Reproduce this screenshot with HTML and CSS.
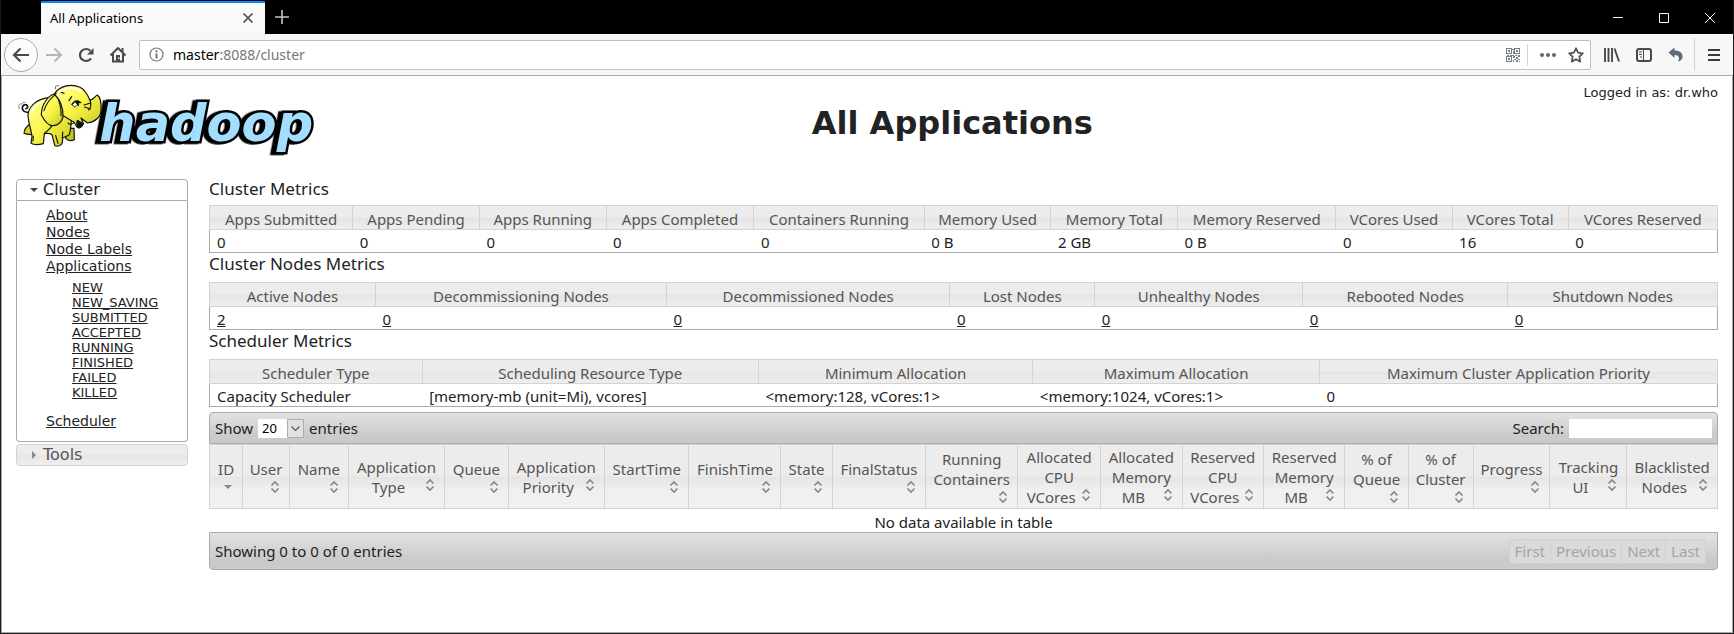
FILE: index.html
```html
<!DOCTYPE html>
<html lang="en">
<head>
<meta charset="utf-8">
<title>All Applications</title>
<link rel="stylesheet" href="styles.css">
</head>
<body>
<div class="window">
  <header class="titlebar">
    <div class="tab">
      <span class="tab-title">All Applications</span>
      <button class="tab-close" aria-label="Close tab"><svg width="12" height="12" viewBox="0 0 12 12"><path d="M1.5 1.5l9 9M10.500 1.500l-9 9" stroke="#4a4a4a" stroke-width="1.700" fill="none"/></svg></button>
    </div>
    <button class="new-tab" aria-label="New tab"><svg width="14" height="14" viewBox="0 0 14 14"><path d="M7 0v14M0 7h14" stroke="#c4c4c4" stroke-width="1.600"/></svg></button>
    <div class="window-controls">
      <button aria-label="Minimize"><svg width="12" height="12" viewBox="0 0 12 12"><path d="M1 5.500h10" stroke="#fff"/></svg></button>
      <button aria-label="Maximize"><svg width="12" height="12" viewBox="0 0 12 12"><path d="M1.500 1.500h9v9h-9z" stroke="#fff" fill="none"/></svg></button>
      <button aria-label="Close"><svg width="12" height="12" viewBox="0 0 12 12"><path d="M1 1l10 10M11 1L1 11" stroke="#fff"/></svg></button>
    </div>
  </header>

  <nav class="toolbar" aria-label="Browser">
    <button class="back" aria-label="Back"><svg width="18" height="16" viewBox="0 0 18 16"><path d="M17 8H2M8.500 1.500L2 8l6.500 6.500" stroke="#4a4a4a" stroke-width="2.200" fill="none"/></svg></button>
    <button class="tool" aria-label="Forward"><svg width="18" height="16" viewBox="0 0 18 16"><path d="M1 8h15M9.500 1.500L16 8l-6.500 6.500" stroke="#b4b4b4" stroke-width="2" fill="none"/></svg></button>
    <button class="tool" aria-label="Reload"><svg width="16" height="16" viewBox="0 0 16 16"><path d="M13 11.300A6 6 0 1 1 12.300 3.800" stroke="#4a4a4a" stroke-width="2.200" fill="none"/><path d="M15.500 1v6.500H9z" fill="#4a4a4a"/></svg></button>
    <button class="tool" aria-label="Home"><svg width="18" height="17" viewBox="0 0 18 17"><path d="M1.500 9.500L9 2l7.500 7.500M13.500 2v4" stroke="#4a4a4a" stroke-width="2" fill="none" stroke-linejoin="round"/><path d="M4 8v7.500h10V8" stroke="#4a4a4a" stroke-width="2" fill="none"/><path d="M7 9h4v7H7z" fill="#4a4a4a"/><path d="M9 11.500h1.500v1.500H9z" fill="#f9f9fa"/></svg></button>
    <div class="urlbar">
      <svg width="15" height="15" viewBox="0 0 15 15"><circle cx="7.500" cy="7.500" r="6.500" fill="none" stroke="#777" stroke-width="1.200"/><path d="M7.500 6.500V11.500" stroke="#666" stroke-width="1.800"/><circle cx="7.500" cy="4.300" r="1.100" fill="#666"/></svg>
      <span class="url"><b>master</b>:8088/cluster</span>
      <div class="url-actions">
        <button aria-label="QR code"><svg width="14" height="14" viewBox="0 0 14 14" shape-rendering="crispEdges"><path d="M.5 .5h5v5h-5zM8.500 .5h5v5h-5zM.5 8.500h5v5h-5z" fill="none" stroke="#737b87"/><path d="M2 2h2v2H2zM10 2h2v2h-2zM2 10h2v2H2zM6 1h2v1H6zM7 3h1v3H7zM1 7h2v1H1zM4 7h4v1H4zM7 8h2v2H7zM9 7h2v1H9zM12 7h2v2h-2zM10 9h2v2h-2zM8 11h2v1H8zM12 11h2v1h-2zM7 12h1v2H7zM10 12h2v2h-2zM13 13h1v1h-1z" fill="#737b87"/></svg></button>
        <span class="url-divider"></span>
        <button aria-label="Page actions"><svg width="16" height="4" viewBox="0 0 16 4"><circle cx="2" cy="2" r="2" fill="#666"/><circle cx="8" cy="2" r="2" fill="#666"/><circle cx="14" cy="2" r="2" fill="#666"/></svg></button>
        <button aria-label="Bookmark"><svg width="16" height="16" viewBox="0 0 16 16"><path d="M8 1.300l2.100 4.400 4.700.6-3.400 3.400.8 4.900L8 12.300l-4.200 2.300.8-4.900L1.200 6.300l4.700-.6z" fill="none" stroke="#555" stroke-width="1.800" stroke-linejoin="round"/></svg></button>
      </div>
    </div>
    <button class="tool library" aria-label="Library"><svg width="16" height="14" viewBox="0 0 16 14"><path d="M1 0v14M4.500 0v14M8 0v14M10.500 .5L15 13.500" stroke="#4a4a4a" stroke-width="1.900"/></svg></button>
    <button class="tool" aria-label="Sidebar"><svg width="16" height="14" viewBox="0 0 16 14"><rect x="1" y="1" width="14" height="12" rx="2" fill="none" stroke="#4a4a4a" stroke-width="2"/><path d="M7.500 1v12" stroke="#4a4a4a"/><path d="M3 4h3M3 6.500h3M4 9h2" stroke="#4a4a4a"/></svg></button>
    <button class="tool" aria-label="Undo"><svg width="16" height="15" viewBox="0 0 16 15"><path d="M.5 5.500L6.500 .5v3C12 3.500 15 6 14.500 10.500 14 12.500 12.500 14 10 14.500 12 11.500 11 8 6.500 8v3z" fill="#5e6b7b"/></svg></button>
    <span class="toolbar-divider"></span>
    <button class="tool menu" aria-label="Menu"><svg width="12" height="12" viewBox="0 0 12 12"><path d="M0 1h12M0 6h12M0 11h12" stroke="#3c3c3c" stroke-width="2"/></svg></button>
  </nav>

  <main class="page">
    <div class="banner">
      <a href="#" class="logo" aria-label="hadoop">
        <svg width="310" height="80" viewBox="45 240 930 240">
          <defs>
            <linearGradient id="skin" x1="0" y1="0" x2="1" y2="1"><stop offset="0" stop-color="#ffffa0"/><stop offset=".45" stop-color="#fbf74e"/><stop offset="1" stop-color="#c9c91c"/></linearGradient>
          </defs>
          <text class="wordmark" x="298" y="424">hadoop</text>
          <g stroke="#111" stroke-width="3.500" stroke-linejoin="round" stroke-linecap="round">
            <path d="M86 336C68 340 62 322 72 315 82 311 88 322 78 326" fill="none" stroke-width="5"/>
            <path d="M93 370C78 380 72 392 72 400 80 404 92 402 100 405L110 385z" fill="#d6d522"/>
            <path d="M205 385L197 416C206 424 216 422 223 419L222 385z" fill="#c4c41c"/>
            <path d="M150 293C110 295 84 320 84 348 86 375 95 392 96 410L93 430C105 437 118 434 130 431L133 401C142 399 150 400 156 404 160 420 162 430 165 437 175 441 185 435 187 428L188 414 207 405C212 395 213 380 214 360L185 310z" fill="url(#skin)"/>
            <path d="M163 282C180 256 215 250 240 262 256 270 263 285 269 299 280 303 285 287 292 285 301 291 304 310 303 330 303 351 285 366 262 369 256 362 249 360 243 354L250 370C247 381 236 388 230 380 224 372 226 366 216 363L186 345z" fill="url(#skin)"/>
            <path d="M232 361C240 366 247 370 250 371 247 381 238 385 232 379 229 372 231 366 232 361z" fill="#171700"/>
            <path d="M163 282C142 288 124 315 124 345 132 360 145 378 158 377 170 378 188 366 189 349 190 325 180 300 163 282z" fill="url(#skin)"/>
            <path d="M163 286C146 300 137 315 132 332M176 300C181 316 184 334 183 347M164 283C174 276 184 276 192 280M207 302L215 290M270 300C274 312 273 323 266 330M252 315L272 309M254 321L271 327M100 408L99 423M167 407L174 430M187 414L188 396M135 398C145 391 151 386 155 378" fill="none"/>
            <path d="M216 313C221 300 232 298 240 306L226 321z" fill="#fff" stroke-width="2.500"/>
            <path d="M228 307l8-2-1 11z" fill="#111"/>
            <path d="M216 313C222 305 232 301 243 308M204 369C209 375 218 374 222 367" fill="none"/>
            <path d="M166 267L167 258 177 257M58 326C54 319 57 314 62 311M65 313C66 309 69 307 74 307" fill="none" stroke="#777" stroke-width="3"/>
          </g>
          <path d="M173 280C195 260 222 260 242 273M94 335C105 316 118 306 130 304" fill="none" stroke="#ffffd0" stroke-width="7" stroke-linecap="round"/>
        </svg>
      </a>
      <h1>All Applications</h1>
      <div class="login">Logged in as: dr.who</div>
    </div>

    <div class="columns">
      <aside class="sidebar">
        <h3 class="side-head open"><svg width="8" height="8" viewBox="0 0 8 8"><path d="M0 2h8L4 6z" fill="#454545"/></svg>Cluster</h3>
        <ul class="side-list">
          <li><a href="#">About</a></li>
          <li><a href="#">Nodes</a></li>
          <li><a href="#">Node Labels</a></li>
          <li><a href="#">Applications</a>
            <ul class="state-list">
              <li><a href="#">NEW</a></li>
              <li><a href="#">NEW_SAVING</a></li>
              <li><a href="#">SUBMITTED</a></li>
              <li><a href="#">ACCEPTED</a></li>
              <li><a href="#">RUNNING</a></li>
              <li><a href="#">FINISHED</a></li>
              <li><a href="#">FAILED</a></li>
              <li><a href="#">KILLED</a></li>
            </ul>
          </li>
          <li><a href="#">Scheduler</a></li>
        </ul>
        <h3 class="side-head closed"><svg width="8" height="8" viewBox="0 0 8 8"><path d="M2 0v8l4-4z" fill="#888"/></svg>Tools</h3>
      </aside>

      <section class="content">
        <h2>Cluster Metrics</h2>
        <table class="metrics cluster">
          <thead><tr><th>Apps Submitted</th><th>Apps Pending</th><th>Apps Running</th><th>Apps Completed</th><th>Containers Running</th><th>Memory Used</th><th>Memory Total</th><th>Memory Reserved</th><th>VCores Used</th><th>VCores Total</th><th>VCores Reserved</th></tr></thead>
          <tbody><tr><td>0</td><td>0</td><td>0</td><td>0</td><td>0</td><td>0 B</td><td>2 GB</td><td>0 B</td><td>0</td><td>16</td><td>0</td></tr></tbody>
        </table>
        <h2>Cluster Nodes Metrics</h2>
        <table class="metrics nodes">
          <thead><tr><th>Active Nodes</th><th>Decommissioning Nodes</th><th>Decommissioned Nodes</th><th>Lost Nodes</th><th>Unhealthy Nodes</th><th>Rebooted Nodes</th><th>Shutdown Nodes</th></tr></thead>
          <tbody><tr><td><a href="#">2</a></td><td><a href="#">0</a></td><td><a href="#">0</a></td><td><a href="#">0</a></td><td><a href="#">0</a></td><td><a href="#">0</a></td><td><a href="#">0</a></td></tr></tbody>
        </table>
        <h2>Scheduler Metrics</h2>
        <table class="metrics scheduler">
          <thead><tr><th>Scheduler Type</th><th>Scheduling Resource Type</th><th>Minimum Allocation</th><th>Maximum Allocation</th><th>Maximum Cluster Application Priority</th></tr></thead>
          <tbody><tr><td>Capacity Scheduler</td><td>[memory-mb (unit=Mi), vcores]</td><td>&lt;memory:128, vCores:1&gt;</td><td>&lt;memory:1024, vCores:1&gt;</td><td>0</td></tr></tbody>
        </table>

        <div class="bar bar-top">
          <label class="length">Show
            <span class="select-box"><select><option>20</option><option>50</option><option>100</option></select><svg width="17" height="19" viewBox="0 0 17 19"><path d="M.5 .5h16v18H.5z" fill="#e1e1e1" stroke="#adadad"/><path d="M4.500 7.500l4 4 4-4" fill="none" stroke="#555" stroke-width="1.200"/></svg></span>
            entries</label>
          <label class="search">Search: <input type="text"></label>
        </div>
        <svg class="sprite" width="0" height="0"><symbol id="sort" viewBox="0 0 16 16"><path d="M4.500 6.500L8 3l3.500 3.500M4.500 9.500L8 13l3.500-3.500" fill="none" stroke="#888" stroke-width="1.700"/></symbol><symbol id="desc" viewBox="0 0 16 16"><path d="M4 6h8l-4 4z" fill="#888"/></symbol></svg>
        <table class="apps">
          <thead><tr>
            <th>ID<svg><use href="#desc"/></svg></th>
            <th>User<svg><use href="#sort"/></svg></th>
            <th>Name<svg><use href="#sort"/></svg></th>
            <th>Application Type<svg><use href="#sort"/></svg></th>
            <th>Queue<svg><use href="#sort"/></svg></th>
            <th>Application Priority<svg><use href="#sort"/></svg></th>
            <th>StartTime<svg><use href="#sort"/></svg></th>
            <th>FinishTime<svg><use href="#sort"/></svg></th>
            <th>State<svg><use href="#sort"/></svg></th>
            <th>FinalStatus<svg><use href="#sort"/></svg></th>
            <th>Running Containers<svg><use href="#sort"/></svg></th>
            <th>Allocated CPU VCores<svg><use href="#sort"/></svg></th>
            <th>Allocated Memory MB<svg><use href="#sort"/></svg></th>
            <th>Reserved CPU VCores<svg><use href="#sort"/></svg></th>
            <th>Reserved Memory MB<svg><use href="#sort"/></svg></th>
            <th>% of Queue<svg><use href="#sort"/></svg></th>
            <th>% of Cluster<svg><use href="#sort"/></svg></th>
            <th>Progress<svg><use href="#sort"/></svg></th>
            <th>Tracking UI<svg><use href="#sort"/></svg></th>
            <th>Blacklisted Nodes<svg><use href="#sort"/></svg></th>
          </tr></thead>
          <tbody><tr><td colspan="20">No data available in table</td></tr></tbody>
        </table>
        <div class="bar bar-bottom">
          <span>Showing 0 to 0 of 0 entries</span>
          <div class="pager"><button disabled>First</button><button disabled>Previous</button><button disabled>Next</button><button disabled>Last</button></div>
        </div>
      </section>
    </div>
  </main>
</div>
</body>
</html>
```

FILE: styles.css
```css
* { box-sizing: border-box; }
body {
  margin: 0;
  background: #fff;
  color: #222;
  font-family: "Noto Sans", "Open Sans", sans-serif;
  font-size: 15px;
  line-height: 20px;
}
button { border: 0; padding: 0; background: none; font: inherit; color: inherit; }
svg { display: block; flex: none; }
a { color: #222; }
h1, h2, h3, ul { margin: 0; padding: 0; }
h2, h3 { font-weight: normal; }

.window {
  display: flex;
  flex-direction: column;
  min-height: 100vh;
  border: solid #1a1a1a;
  border-width: 0 1px 1px;
}

/* Title bar */
.titlebar { display: flex; height: 34px; background: #000; }
.tab {
  display: flex;
  align-items: center;
  justify-content: space-between;
  width: 224px;
  margin: 1px 0 0 40px;
  padding: 0 11px 2px 9px;
  border-top: 2px solid #0a84ff;
  background: #f9f9fa;
  color: #000;
  font-size: 13px;
}
.new-tab { padding: 0 10px; }
.window-controls { display: flex; gap: 34px; margin-left: auto; padding: 2px 17px 0 0; }

/* Navigation bar */
.toolbar {
  display: flex;
  align-items: center;
  height: 41px;
  padding: 0 13px 0 3px;
  background: #f7f7f8;
}
.back {
  display: grid;
  place-items: center;
  width: 34px;
  height: 34px;
  border: 1px solid #aaa;
  border-radius: 50%;
  background: #fcfcfc;
}
.tool { display: grid; place-items: center; width: 32px; height: 32px; }
.urlbar {
  display: flex;
  flex: 1;
  align-items: center;
  gap: 9px;
  height: 30px;
  margin: 0 5px;
  padding: 0 6px 0 9px;
  border: 1px solid #bfbfbf;
  border-radius: 2px;
  background: #fff;
}
.url { color: #777; font-size: 14px; }
.url b { color: #000; font-weight: normal; }
.url-actions { display: flex; align-items: center; gap: 12px; margin-left: auto; }
.url-divider { width: 1px; height: 22px; margin: 0 0 0 -5px; background: #d5d5d5; }
.back, .tool { flex: none; }
.toolbar-divider { width: 1px; height: 33px; margin: 0 13px 0 2px; background: #d0d0d0; }
.menu { width: 12px; }

/* Page */
.page {
  flex: 1;
  padding: 0 14px 20px 13px;
  border: 1px solid #aaa;
}
.banner { display: flex; height: 90px; }
.logo { padding-top: 4px; }
.wordmark {
  fill: #a3deff;
  stroke: #000;
  stroke-width: 15px;
  paint-order: stroke;
  font: italic bold 153px "DejaVu Sans", Verdana, sans-serif;
  filter: drop-shadow(-10px 2px 0 #000);
}
.banner h1 {
  flex: 1;
  padding-top: 27px;
  text-align: center;
  font: bold 32px/40px "DejaVu Sans", Verdana, sans-serif;
}
.login {
  padding: 9px 0 0 4px;
  white-space: nowrap;
  font: 13px/16px "DejaVu Sans", Verdana, sans-serif;
}
.columns { display: flex; align-items: flex-start; gap: 21px; padding: 13px 0 0 1px; }

/* Side menu */
.sidebar { flex: none; width: 172px; font-family: "DejaVu Sans", Verdana, sans-serif; }
.side-head {
  display: flex;
  align-items: center;
  gap: 5px;
  height: 22px;
  padding-left: 13px;
  border: 1px solid #aaa;
  border-radius: 4px;
  font-size: 16px;
}
.side-head.open { border-radius: 4px 4px 0 0; }
.side-head.closed {
  margin-top: 2px;
  border-color: #d3d3d3;
  background: linear-gradient(#ececec 50%, #e5e5e5 50%, #efefef);
  color: #555;
}
.side-list {
  padding: 6px 0 11px 29px;
  border: 1px solid #aaa;
  border-top: 0;
  border-radius: 0 0 4px 4px;
  list-style: none;
  font-size: 14px;
  line-height: 17px;
}
.state-list {
  padding: 5px 0 13px 26px;
  list-style: none;
  font-size: 13px;
  line-height: 15px;
}

/* Tables */
.content { flex: 1; min-width: 0; }
h2 { height: 29px; font-size: 17px; line-height: 22px; }
.content > h2:first-child { height: 26px; line-height: 20px; }
table { width: 100%; table-layout: fixed; border-collapse: collapse; }
th {
  border: 1px solid #d3d3d3;
  background: linear-gradient(#ececec 50%, #e5e5e5 50%, #f0f0f0 calc(50% + 14px));
  color: #555;
  font-weight: normal;
}
.metrics { border: 1px solid #aaa; }
.metrics th, .metrics td { padding: 3px 0 0; white-space: nowrap; }
.metrics td { padding-left: 7px; line-height: 19px; }

.cluster th:nth-child(1) { width: 9.5%; }
.cluster th:nth-child(2), .cluster th:nth-child(3) { width: 8.4%; }
.cluster th:nth-child(4) { width: 9.8%; }
.cluster th:nth-child(5) { width: 11.3%; }
.cluster th:nth-child(6), .cluster th:nth-child(7) { width: 8.4%; }
.cluster th:nth-child(8) { width: 10.5%; }
.cluster th:nth-child(9), .cluster th:nth-child(10) { width: 7.7%; }
.cluster th:nth-child(11) { width: 9.9%; }

.nodes th:nth-child(1) { width: 11%; }
.nodes th:nth-child(2) { width: 19.3%; }
.nodes th:nth-child(3) { width: 18.8%; }
.nodes th:nth-child(4) { width: 9.6%; }
.nodes th:nth-child(5) { width: 13.8%; }
.nodes th:nth-child(6) { width: 13.6%; }
.nodes th:nth-child(7) { width: 13.9%; }

.scheduler th:nth-child(1) { width: 14.1%; }
.scheduler th:nth-child(2) { width: 22.3%; }
.scheduler th:nth-child(3) { width: 18.2%; }
.scheduler th:nth-child(4) { width: 19%; }
.scheduler th:nth-child(5) { width: 26.4%; }

.apps th { height: 64px; padding: 1px 6px; vertical-align: middle; }
.apps th svg { float: right; width: 16px; height: 16px; }
.apps td { padding: 3px 0 0; text-align: center; }
.apps th:nth-child(1) { width: 2.2%; }
.apps th:nth-child(2) { width: 3.1%; }
.apps th:nth-child(3) { width: 3.9%; }
.apps th:nth-child(4), .apps th:nth-child(6) { width: 6.4%; }
.apps th:nth-child(5), .apps th:nth-child(16) { width: 4.2%; }
.apps th:nth-child(7) { width: 5.6%; }
.apps th:nth-child(8), .apps th:nth-child(11) { width: 6.1%; }
.apps th:nth-child(9) { width: 3.4%; }
.apps th:nth-child(10) { width: 6.2%; }
.apps th:nth-child(12) { width: 5.5%; }
.apps th:nth-child(13), .apps th:nth-child(14), .apps th:nth-child(15) { width: 5.4%; }
.apps th:nth-child(17) { width: 4.3%; }
.apps th:nth-child(18), .apps th:nth-child(19) { width: 5.1%; }
.apps th:nth-child(20) { width: 6%; }
.sprite { position: absolute; }

/* Bars around the applications table */
.bar {
  display: flex;
  align-items: center;
  justify-content: space-between;
  padding: 0 5px;
  border: 1px solid #aaa;
  background: linear-gradient(#e2e2e2, #cacaca 75%);
}
.bar-top { height: 32px; margin-top: 5px; border-radius: 4px 4px 0 0; }
.bar-bottom { height: 38px; padding-right: 11px; border-radius: 0 0 4px 4px; }
.length, .search { display: flex; align-items: center; gap: 5px; }
.select-box { position: relative; display: flex; width: 46px; height: 19px; }
.select-box select {
  width: 100%;
  height: 19px;
  padding: 0 4px;
  border: 0;
  border-radius: 0;
  appearance: none;
  background: #fff;
  color: #000;
  font: 13px/18px "Noto Sans", sans-serif;
}
.select-box svg { position: absolute; top: 0; right: 0; pointer-events: none; }
.search input { width: 143px; height: 19px; padding: 0 2px; border: 0; background: #fff; font: inherit; }
.pager { display: flex; }
.pager button {
  height: 25px;
  padding: 0 5px;
  border: 1px solid #d0d0d0;
  border-left-width: 0;
  background: #dadada;
  color: #a5a5a5;
}
.pager button:first-child { border-left-width: 1px; border-radius: 4px 0 0 4px; }
.pager button:last-child { border-radius: 0 4px 4px 0; }
```
